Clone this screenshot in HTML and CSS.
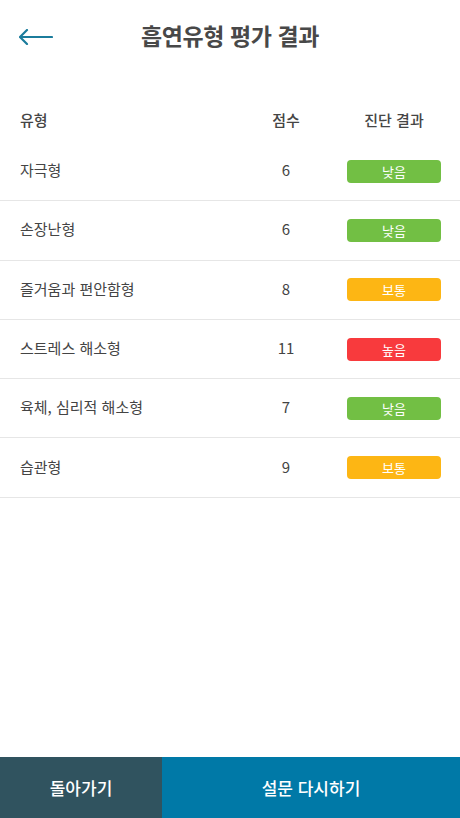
FILE: index.html
```html
<!DOCTYPE html>
<html lang="ko">
<head>
  <meta charset="UTF-8">
  <meta name="viewport" content="width=device-width, initial-scale=1.0">
  <title>흡연유형 평가 결과</title>
  <link rel="stylesheet" href="styles.css">
</head>
<body>
  <div class="page">
    <!-- 상단 헤더 -->
    <header class="header">
      <a href="#" class="back" aria-label="뒤로">
        <svg width="34" height="16" viewBox="0 0 34 16">
          <path d="M1 8 H33 M8 1 L1 8 L8 15" fill="none" stroke="#1b7c9c" stroke-width="2.2" stroke-linecap="round" stroke-linejoin="round"/>
        </svg>
      </a>
      <h1>흡연유형 평가 결과</h1>
    </header>

    <!-- 결과 표 -->
    <div class="table">
      <div class="row head">
        <span class="col-type">유형</span>
        <span class="col-score">점수</span>
        <span class="col-result">진단 결과</span>
      </div>
      <div class="row">
        <span class="col-type">자극형</span>
        <span class="col-score">6</span>
        <span class="col-result"><span class="badge low">낮음</span></span>
      </div>
      <div class="row">
        <span class="col-type">손장난형</span>
        <span class="col-score">6</span>
        <span class="col-result"><span class="badge low">낮음</span></span>
      </div>
      <div class="row">
        <span class="col-type">즐거움과 편안함형</span>
        <span class="col-score">8</span>
        <span class="col-result"><span class="badge mid">보통</span></span>
      </div>
      <div class="row">
        <span class="col-type">스트레스 해소형</span>
        <span class="col-score">11</span>
        <span class="col-result"><span class="badge high">높음</span></span>
      </div>
      <div class="row">
        <span class="col-type">육체, 심리적 해소형</span>
        <span class="col-score">7</span>
        <span class="col-result"><span class="badge low">낮음</span></span>
      </div>
      <div class="row">
        <span class="col-type">습관형</span>
        <span class="col-score">9</span>
        <span class="col-result"><span class="badge mid">보통</span></span>
      </div>
    </div>

    <!-- 하단 버튼 -->
    <footer class="bottom">
      <button class="btn-back">돌아가기</button>
      <button class="btn-retry">설문 다시하기</button>
    </footer>
  </div>
</body>
</html>
```

FILE: styles.css
```css
* {
  box-sizing: border-box;
}

body {
  margin: 0;
  background: #ffffff;
  font-family: "Noto Sans CJK KR", "Noto Sans", sans-serif;
  color: #444444;
}

.page {
  height: 818px;
  display: flex;
  flex-direction: column;
}

/* 헤더 */
.header {
  position: relative;
  height: 72px;
  display: flex;
  align-items: center;
  justify-content: center;
  padding-bottom: 2px;
}

.back {
  position: absolute;
  left: 19px;
  top: 29px;
  display: flex;
}

.header h1 {
  margin: 0;
  font-size: 23px;
  font-weight: 700;
  color: #484848;
  letter-spacing: -0.4px;
}

/* 표 */
.table {
  flex: 1;
  padding-top: 27px;
}

.row {
  display: flex;
  align-items: center;
  height: 59.3px;
  padding: 0 19px 3px 20px;
  border-bottom: 1px solid #e6e6e6;
  font-size: 15px;
}

.row.head {
  height: 43px;
  border-bottom: none;
  font-weight: 500;
  color: #454545;
}

.col-type {
  flex: 1;
}

.col-score {
  width: 60px;
  text-align: center;
  margin-right: 31px;
}

.col-result {
  width: 94px;
  display: flex;
  justify-content: center;
}

.badge {
  width: 94px;
  height: 23px;
  margin-top: 3px;
  border-radius: 4px;
  color: #ffffff;
  font-size: 13px;
  display: flex;
  align-items: center;
  justify-content: center;
}

.badge.low {
  background: #72bf44;
}

.badge.mid {
  background: #fdb614;
}

.badge.high {
  background: #f83a3d;
}

/* 하단 버튼 */
.bottom {
  display: flex;
  height: 61px;
}

.bottom button {
  border: none;
  color: #ffffff;
  font-family: inherit;
  font-size: 17px;
  font-weight: 500;
  cursor: pointer;
}

.btn-back {
  width: 162px;
  background: #30535f;
}

.btn-retry {
  flex: 1;
  background: #0079a7;
}
```
